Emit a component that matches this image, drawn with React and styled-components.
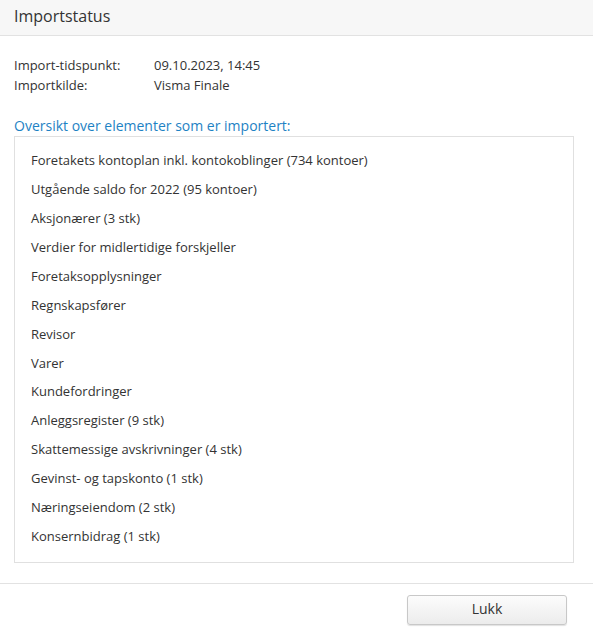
import React from "react"
import styled, { createGlobalStyle } from "styled-components"

const GlobalStyle = createGlobalStyle`
  html, body {
    margin: 0;
    padding: 0;
    background: #ffffff;
  }
  body {
    font-family: "Open Sans", "Liberation Sans", sans-serif;
    color: #333333;
  }
`

const Dialog = styled.div`
  width: 593px;
  height: 629px;
  display: flex;
  flex-direction: column;
  background: #ffffff;
`

const Header = styled.div`
  height: 35px;
  background: #f7f7f7;
  border-bottom: 1px solid #e2e2e2;
  display: flex;
  align-items: center;
  padding: 0 14px;
  box-sizing: content-box;
`

const Title = styled.h1`
  margin: 0;
  font-size: 16px;
  font-weight: 400;
  color: #333;
  position: relative;
  top: -2px;
`

const Body = styled.div`
  padding: 19px 19px 20px 14px;
  display: flex;
  flex-direction: column;
`

const InfoGrid = styled.div`
  display: grid;
  grid-template-columns: 140px 1fr;
  font-size: 13px;
  line-height: 20px;
`

const Label = styled.div`
  color: #333;
`

const Value = styled.div`
  color: #333;
`

const SectionTitle = styled.h2`
  margin: 21px 0 0;
  font-size: 14px;
  font-weight: 400;
  line-height: 20px;
  color: #1e82c4;
`

const ItemBox = styled.ul`
  list-style: none;
  margin: 0;
  padding: 9px 16px 12px 16px;
  border: 1px solid #e0e0e0;
`

const Item = styled.li`
  font-size: 13px;
  line-height: 20px;
  padding: 4.45px 0;
  color: #333;
`

const Footer = styled.div`
  border-top: 1px solid #e2e2e2;
  display: flex;
  justify-content: flex-end;
  padding: 11px 26px 0 0;
`

const Button = styled.button`
  width: 160px;
  height: 30px;
  border: 1px solid #c8c8c8;
  border-radius: 3px;
  background: linear-gradient(#fcfcfc, #ececec);
  box-shadow: 0 1px 1px rgba(0, 0, 0, 0.12);
  font-family: "Open Sans", "Liberation Sans", sans-serif;
  font-size: 14px;
  line-height: 20px;
  padding: 0 0 3px;
  color: #333;
  cursor: pointer;
`

const items = [
  "Foretakets kontoplan inkl. kontokoblinger (734 kontoer)",
  "Utgående saldo for 2022 (95 kontoer)",
  "Aksjonærer (3 stk)",
  "Verdier for midlertidige forskjeller",
  "Foretaksopplysninger",
  "Regnskapsfører",
  "Revisor",
  "Varer",
  "Kundefordringer",
  "Anleggsregister (9 stk)",
  "Skattemessige avskrivninger (4 stk)",
  "Gevinst- og tapskonto (1 stk)",
  "Næringseiendom (2 stk)",
  "Konsernbidrag (1 stk)",
]

export default function App() {
  return (
    <>
      <GlobalStyle />
      <Dialog>
        <Header>
          <Title>Importstatus</Title>
        </Header>
        <Body>
          <InfoGrid>
            <Label>Import-tidspunkt:</Label>
            <Value>09.10.2023, 14:45</Value>
            <Label>Importkilde:</Label>
            <Value>Visma Finale</Value>
          </InfoGrid>
          <SectionTitle>Oversikt over elementer som er importert:</SectionTitle>
          <ItemBox>
            {items.map((item) => (
              <Item key={item}>{item}</Item>
            ))}
          </ItemBox>
        </Body>
        <Footer>
          <Button>Lukk</Button>
        </Footer>
      </Dialog>
    </>
  )
}
